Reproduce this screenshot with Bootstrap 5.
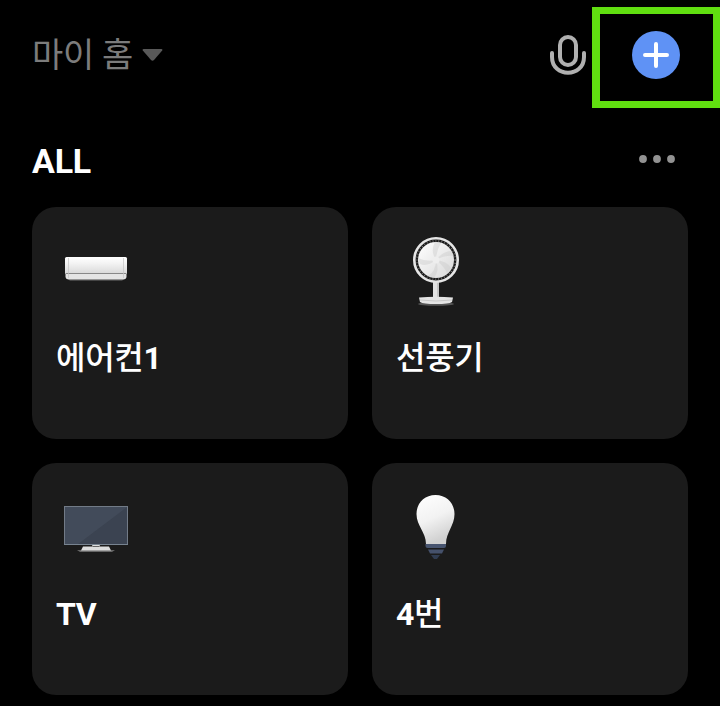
<!DOCTYPE html>
<html lang="ko">
<head>
<meta charset="utf-8">
<meta name="viewport" content="width=device-width, initial-scale=1">
<title>마이 홈</title>
<link href="https://cdn.jsdelivr.net/npm/bootstrap@5.3.0/dist/css/bootstrap.min.css" rel="stylesheet">
<style>
body{background:#000;color:#fff;font-family:Roboto,"Noto Sans CJK KR",sans-serif;height:706px;overflow:hidden}
svg{display:block;flex:none}
.topbar{height:108px;padding:2px 40px 0 32px}
.home-name{font-size:34px;line-height:48px;color:#7c7c7c;font-weight:400;letter-spacing:-.3px}
.highlight-box{position:absolute;left:592px;top:7px;width:128px;height:101px;border:7px solid #60de10;border-left-width:8px}
.section-head{height:99px;padding:2px 44px 0 32px}
.section-title{font-size:34px;line-height:40px;font-weight:700;letter-spacing:-.2px;padding-top:4px}
.device-grid{display:grid;grid-template-columns:316px 316px;grid-auto-rows:232px;gap:24px;padding:0 32px}
.device{background:#1b1b1b;border-radius:24px;padding:20px 24px}
.device-name{font-size:32px;line-height:48px;font-weight:500;margin-top:27px;letter-spacing:-.3px}
.latin{font-weight:700}
</style>
</head>
<body>
<header class="topbar d-flex align-items-center justify-content-between">
  <div class="d-flex align-items-center gap-2">
    <span class="home-name">마이 홈</span>
    <svg width="22" height="14" viewBox="0 0 22 14"><path d="M2.500 1H20.500Q22 1 21.200 2.500L13 12Q11.500 13.500 10 12L1.800 2.500Q1 1 2.500 1Z" fill="#595959"/></svg>
  </div>
  <div class="d-flex align-items-center">
    <svg class="me-5" width="38" height="42" viewBox="546 34 38 42" fill="none" stroke="#b0b0b0" stroke-width="4" stroke-linecap="round" overflow="visible"><rect x="560" y="37" width="16" height="28" rx="8"/><path d="M552 53V57C552 78 584 78 584 57V53"/></svg>
    <svg width="48" height="48" viewBox="0 0 48 48"><circle cx="24" cy="24" r="24" fill="#5f92f5"/><path d="M13 24H35M24 13V35" stroke="#fff" stroke-width="4" stroke-linecap="round"/></svg>
  </div>
</header>
<div class="highlight-box"></div>
<main>
  <div class="section-head d-flex align-items-center justify-content-between">
    <h1 class="section-title m-0">ALL</h1>
    <svg width="38" height="10" viewBox="638 154 38 10" fill="#929292"><circle cx="643" cy="159" r="3.900"/><circle cx="657" cy="159" r="3.900"/><circle cx="671" cy="159" r="3.900"/></svg>
  </div>
  <div class="device-grid">
    <section class="device">
      <svg width="80" height="80" viewBox="56 227 80 80">
        <defs><linearGradient id="ac" x2="0" y2="1"><stop stop-color="#fff"/><stop offset=".35" stop-color="#f4f4f4"/><stop offset="1" stop-color="#d8d8d8"/></linearGradient></defs>
        <path d="M67 278H125L122 281H70Z" fill="#444"/>
        <path d="M65.500 273H126.500V277Q126 279.500 123 279.500H69Q66 279.500 65.500 277Z" fill="#e4e4e4"/>
        <rect x="65" y="257" width="62" height="17" rx="1.500" fill="url(#ac)"/>
        <path d="M66 273.500H126" stroke="#888"/><path d="M68.500 258V278M123.500 258V278" stroke="#c4c4c4" stroke-width=".7"/>
      </svg>
      <div class="device-name">에어컨<span class="latin">1</span></div>
    </section>
    <section class="device">
      <svg width="80" height="80" viewBox="396 227 80 80">
        <defs><linearGradient id="fan" x2="1" y2="1"><stop stop-color="#fff"/><stop offset="1" stop-color="#d8d8d8"/></linearGradient></defs>
        <ellipse cx="436" cy="304" rx="18" ry="1.800" fill="#555"/>
        <path d="M433 281H439V299H433Z" fill="#e3e3e3"/><path d="M438 282V298" stroke="#aaa"/>
        <path d="M419 297.500Q436 296 453 297.500L452 302Q449 304 436 304Q423 304 420 302Z" fill="#e4e4e4"/><path d="M420 300Q436 302 452 300" stroke="#bbb" fill="none" stroke-width=".7"/>
        <circle cx="436" cy="260" r="21.700" fill="#1a1a1a" stroke="#e6e6e6" stroke-width="2.600"/>
        <circle cx="436" cy="260" r="19.300" fill="none" stroke="#999" stroke-width="2" stroke-dasharray=".6 2.400"/>
        <circle cx="436" cy="260" r="18" fill="url(#fan)"/>
        <g fill="#c9c9c9" opacity=".4"><path d="M436 260Q430 251 435 242L441 243Q436 251 436 260Z"/><path d="M436 260Q442 252 451 251L454 256Q445 255 436 260Z"/><path d="M436 260Q447 261 451 268L447 273Q444 266 436 260Z"/><path d="M436 260Q440 270 434 278L428 276Q436 271 436 260Z"/><path d="M436 260Q427 267 420 264L418 258Q426 262 436 260Z"/></g>
        <circle cx="436" cy="260" r="3.500" fill="#eee"/>
      </svg>
      <div class="device-name">선풍기</div>
    </section>
    <section class="device">
      <svg width="80" height="80" viewBox="56 483 80 80">
        <path d="M77 550H115L112 552H80Z" fill="#666"/>
        <path d="M91 544H101L99 546.500H109L111 550.500H81L83 546.500H93Z" fill="#ddd"/><path d="M93 546.500H99" stroke="#666"/>
        <rect x="64.500" y="506.500" width="63" height="38" fill="#3b4351" stroke="#727b87"/>
        <path d="M65 507H127L78 544H65Z" fill="#465060" opacity=".65"/><path d="M64 544.500H128" stroke="#778390"/>
      </svg>
      <div class="device-name latin">TV</div>
    </section>
    <section class="device">
      <svg width="80" height="80" viewBox="396 483 80 80">
        <defs><linearGradient id="bulb" x2=".35" y2="1"><stop stop-color="#fff"/><stop offset=".55" stop-color="#f2f2f2"/><stop offset="1" stop-color="#d1d1d1"/></linearGradient></defs>
        <path d="M435.500 495C424 495 416.500 503.500 416.500 514C416.500 526 426 532 426 544H446C446 532 454.500 526 454.500 514C454.500 503.500 447 495 435.500 495Z" fill="url(#bulb)"/>
        <path d="M425.500 544H446V546Q446 548 444 548H427.500Q425.500 548 425.500 546Z" fill="#485570"/>
        <path d="M428 549.500H444L442 553.500H430Z" fill="#45516b"/><path d="M431 555H440L437 559H434Z" fill="#303c51"/>
      </svg>
      <div class="device-name"><span class="latin">4</span>번</div>
    </section>
  </div>
</main>
<script src="https://cdn.jsdelivr.net/npm/bootstrap@5.3.0/dist/js/bootstrap.bundle.min.js"></script>
</body>
</html>
